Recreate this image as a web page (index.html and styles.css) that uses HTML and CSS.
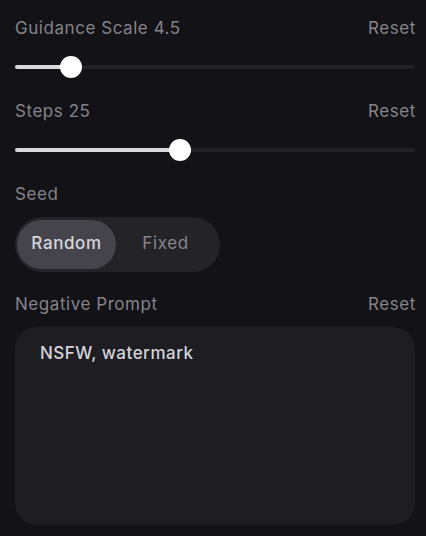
FILE: index.html
```html
<!DOCTYPE html>
<html>
<head>
<meta charset="utf-8">
<link rel="stylesheet" href="styles.css">
</head>
<body>
<div class="panel">
  <section class="field">
    <div class="field-head"><span class="label">Guidance Scale 4.5</span><span class="reset">Reset</span></div>
    <div class="slider">
      <div class="track"><div class="fill" style="width:14%"></div></div>
      <div class="thumb" style="left:14%"></div>
    </div>
  </section>
  <section class="field">
    <div class="field-head"><span class="label">Steps 25</span><span class="reset">Reset</span></div>
    <div class="slider">
      <div class="track"><div class="fill" style="width:41.25%"></div></div>
      <div class="thumb" style="left:41.25%"></div>
    </div>
  </section>
  <section class="field">
    <div class="field-head"><span class="label">Seed</span></div>
    <div class="toggle">
      <button class="opt active">Random</button>
      <button class="opt">Fixed</button>
    </div>
  </section>
  <section class="field">
    <div class="field-head"><span class="label">Negative Prompt</span><span class="reset">Reset</span></div>
    <div class="prompt">NSFW, watermark</div>
  </section>
</div>
</body>
</html>
```

FILE: styles.css
```css
html, body {
  margin: 0;
  padding: 0;
  background: #131217;
  font-family: "Inter", "Noto Sans", sans-serif;
}
.panel {
  padding: 15px 11px 0 15px;
  display: flex;
  flex-direction: column;
}
.field-head {
  display: flex;
  justify-content: space-between;
  align-items: center;
  height: 22px;
  padding-top: 2px;
  font-size: 17px;
  letter-spacing: 0.55px;
  color: #85848b;
}
.reset {
  letter-spacing: 0.6px;
  margin-right: -1px;
}
.slider {
  position: relative;
  height: 22px;
  margin: 17px 0 20px;
  display: flex;
  align-items: center;
}
.track {
  width: 100%;
  height: 4px;
  border-radius: 2px;
  background: #222126;
}
.fill {
  height: 100%;
  border-radius: 2px;
  background: #d9d9de;
}
.thumb {
  position: absolute;
  top: 0;
  width: 22px;
  height: 22px;
  margin-left: -11px;
  border-radius: 50%;
  background: #ffffff;
}
.toggle {
  margin: 12px 0 19px;
  width: 205px;
  height: 55px;
  box-sizing: border-box;
  padding: 3px 2px;
  border-radius: 28px;
  background: #242328;
  display: flex;
}
.opt {
  flex: 0 0 99px;
  border: 0;
  border-radius: 25px;
  background: transparent;
  font-family: inherit;
  font-size: 17px;
  letter-spacing: 0.6px;
  color: #86858c;
  padding: 0 0 3px;
}
.opt.active {
  background: #45444a;
  color: #d6d6dc;
  font-weight: 500;
}
.prompt {
  margin-top: 12px;
  height: 198px;
  box-sizing: border-box;
  border-radius: 22px;
  background: #1e1d22;
  padding: 16px 25px;
  font-size: 17px;
  letter-spacing: 0.5px;
  font-weight: 500;
  color: #d4d4da;
}
```
